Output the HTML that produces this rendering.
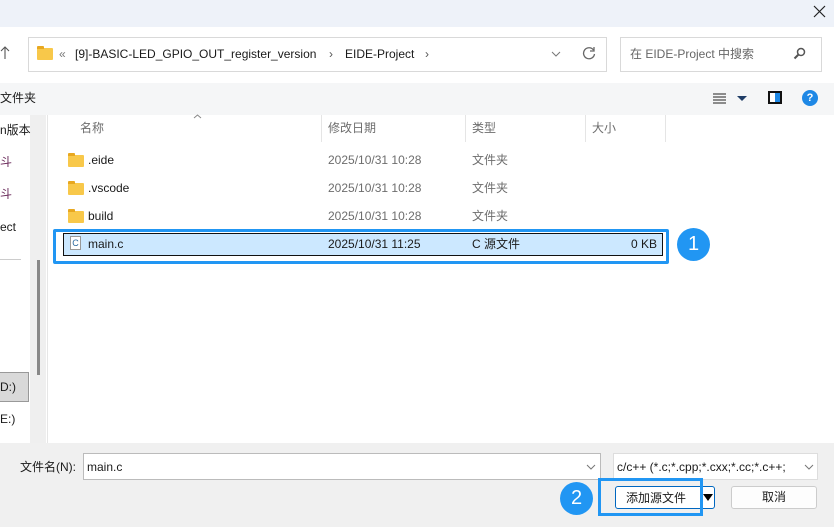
<!DOCTYPE html>
<html><head><meta charset="utf-8"><style>
*{margin:0;padding:0;box-sizing:border-box}
body{width:834px;height:527px;overflow:hidden;position:relative;background:#fff;font-family:"Liberation Sans","Noto Sans CJK SC",sans-serif;font-size:12px;color:#1a1a1a}
.a{position:absolute}
.t{position:absolute;white-space:nowrap;line-height:16px}
.folder{position:absolute;width:16px;height:12px;background:#f8c84a;border-radius:1px}
.folder:before{content:"";position:absolute;left:0;top:-2px;width:7px;height:3px;background:#e8a820;border-radius:1px 1px 0 0}
.g{color:#6d6d6d}
</style></head><body>
<div class="a" style="left:0;top:0;width:834px;height:27px;background:#eef2f9"></div>
<svg class="a" style="left:813px;top:5px" width="13" height="13"><path d="M1 1L12 12M12 1L1 12" stroke="#222" stroke-width="1.2"/></svg>
<svg class="a" style="left:0;top:46px" width="10" height="14"><path d="M5 1V13M1 5L5 1L9 5" stroke="#555" stroke-width="1.1" fill="none"/></svg>
<div class="a" style="left:28px;top:37px;width:579px;height:35px;border:1px solid #d9d9d9;background:#fff"></div>
<div class="folder" style="left:37px;top:48px"></div>
<div class="t" style="left:59px;top:46px;color:#777">«</div>
<div class="t" style="left:75px;top:46px">[9]-BASIC-LED_GPIO_OUT_register_version</div>
<div class="t" style="left:329px;top:46px;color:#555">›</div>
<div class="t" style="left:345px;top:46px">EIDE-Project</div>
<div class="t" style="left:425px;top:46px;color:#555">›</div>
<svg class="a" style="left:551px;top:51px" width="10" height="6"><path d="M1 1L5 5L9 1" stroke="#777" fill="none"/></svg>
<svg class="a" style="left:582px;top:46px" width="14" height="14"><path d="M11.5 4A5.5 5.5 0 1 0 12.5 8" stroke="#666" stroke-width="1.3" fill="none"/><path d="M12 1V5H8" stroke="#666" stroke-width="1.3" fill="none"/></svg>
<div class="a" style="left:620px;top:37px;width:202px;height:35px;border:1px solid #d9d9d9;background:#fff"></div>
<div class="t" style="left:630px;top:46px;color:#666">在 EIDE-Project 中搜索</div>
<svg class="a" style="left:793px;top:47px" width="13" height="13"><circle cx="8" cy="5" r="3.5" fill="none" stroke="#555" stroke-width="1.5"/><line x1="5.5" y1="7.5" x2="1.5" y2="11.5" stroke="#555" stroke-width="2"/></svg>
<div class="a" style="left:0;top:83px;width:834px;height:32px;background:#f5f6f7"></div>
<div class="t" style="left:0;top:90px">文件夹</div>
<svg class="a" style="left:713px;top:92px" width="14" height="12"><path d="M0 2H13M0 5H13M0 8H13M0 11H13" stroke="#222" stroke-width="1"/></svg>
<div class="a" style="left:737px;top:96px;border-left:5px solid transparent;border-right:5px solid transparent;border-top:5px solid #1f3d66"></div>
<div class="a" style="left:768px;top:91px;width:14px;height:13px;border:2px solid #111;background:linear-gradient(90deg,#fff 50%,#1e88e5 50%)"></div>
<div class="a" style="left:802px;top:90px;width:16px;height:16px;border-radius:50%;background:#1e88e5;color:#fff;font-weight:bold;font-size:11px;text-align:center;line-height:16px">?</div>
<div class="a" style="left:30px;top:115px;width:16px;height:328px;background:#efefef"></div>
<div class="a" style="left:37px;top:260px;width:3px;height:115px;background:#888"></div>
<div class="a" style="left:47px;top:115px;width:1px;height:328px;background:#e6e6e6"></div>
<div class="t" style="left:0;top:122px">n版本</div>
<div class="t" style="left:0;top:154px;color:#6a2a5a">斗</div>
<div class="t" style="left:0;top:186px;color:#6a2a5a">斗</div>
<div class="t" style="left:0;top:219px">ect</div>
<div class="a" style="left:0;top:259px;width:21px;height:1px;background:#ccc"></div>
<div class="a" style="left:0;top:372px;width:29px;height:30px;background:#d9d9d9;border:1px solid #999;border-left:none"></div>
<div class="t" style="left:0;top:379px">D:)</div>
<div class="t" style="left:0;top:411px">E:)</div>
<svg class="a" style="left:193px;top:114px" width="9" height="5"><path d="M1 4L4.5 1L8 4" stroke="#888" fill="none"/></svg>
<div class="t g" style="left:80px;top:120px">名称</div>
<div class="t g" style="left:328px;top:120px">修改日期</div>
<div class="t g" style="left:472px;top:120px">类型</div>
<div class="t g" style="left:592px;top:120px">大小</div>
<div class="a" style="left:321px;top:115px;width:1px;height:27px;background:#e5e5e5"></div>
<div class="a" style="left:465px;top:115px;width:1px;height:27px;background:#e5e5e5"></div>
<div class="a" style="left:585px;top:115px;width:1px;height:27px;background:#e5e5e5"></div>
<div class="a" style="left:665px;top:115px;width:1px;height:27px;background:#e5e5e5"></div>
<div class="folder" style="left:68px;top:155px"></div><div class="t" style="left:88px;top:152px">.eide</div><div class="t g" style="left:328px;top:152px">2025/10/31 10:28</div><div class="t g" style="left:472px;top:152px">文件夹</div>
<div class="folder" style="left:68px;top:183px"></div><div class="t" style="left:88px;top:180px">.vscode</div><div class="t g" style="left:328px;top:180px">2025/10/31 10:28</div><div class="t g" style="left:472px;top:180px">文件夹</div>
<div class="folder" style="left:68px;top:211px"></div><div class="t" style="left:88px;top:208px">build</div><div class="t g" style="left:328px;top:208px">2025/10/31 10:28</div><div class="t g" style="left:472px;top:208px">文件夹</div>
<div class="a" style="left:53px;top:229px;width:616px;height:35px;border:3px solid #2196f3;border-radius:2px"></div>
<div class="a" style="left:63px;top:233px;width:600px;height:23px;background:#cce8ff;border:1px solid #111"></div>
<div class="a" style="left:70px;top:236px;width:11px;height:14px;border:1px solid #999;background:#fff;font-size:9px;color:#2a6aa0;text-align:center;line-height:12px">C</div>
<div class="t" style="left:88px;top:236px">main.c</div><div class="t" style="left:328px;top:236px">2025/10/31 11:25</div><div class="t" style="left:472px;top:236px">C 源文件</div><div class="t" style="left:631px;top:236px">0 KB</div>
<div class="a" style="left:677px;top:228px;width:33px;height:33px;border-radius:50%;background:#2196f3;color:#fff;font-size:20px;text-align:center;line-height:33px">1</div>
<div class="a" style="left:0;top:443px;width:834px;height:84px;background:#f0f0f0"></div>
<div class="t" style="left:20px;top:459px">文件名(N):</div>
<div class="a" style="left:83px;top:453px;width:518px;height:27px;background:#fff;border:1px solid #bbb"></div>
<div class="t" style="left:87px;top:459px">main.c</div>
<svg class="a" style="left:586px;top:464px" width="10" height="6"><path d="M1 1L5 5L9 1" stroke="#777" fill="none"/></svg>
<div class="a" style="left:613px;top:453px;width:205px;height:27px;background:#fff;border:1px solid #ddd"></div>
<div class="t" style="left:617px;top:459px">c/c++ (*.c;*.cpp;*.cxx;*.cc;*.c++;</div>
<svg class="a" style="left:804px;top:464px" width="10" height="6"><path d="M1 1L5 5L9 1" stroke="#777" fill="none"/></svg>
<div class="a" style="left:615px;top:486px;width:100px;height:23px;background:#fff;border:1px solid #0067c0;border-radius:3px"></div>
<div class="t" style="left:626px;top:490px">添加源文件</div>
<div class="a" style="left:703px;top:494px;border-left:5px solid transparent;border-right:5px solid transparent;border-top:7px solid #000"></div>
<div class="a" style="left:598px;top:478px;width:105px;height:38px;border:3px solid #2196f3"></div>
<div class="a" style="left:731px;top:486px;width:86px;height:23px;background:#fdfdfd;border:1px solid #ccc;border-radius:3px;text-align:center;line-height:21px">取消</div>
<div class="a" style="left:560px;top:482px;width:33px;height:33px;border-radius:50%;background:#2196f3;color:#fff;font-size:20px;text-align:center;line-height:33px">2</div>
</body></html>
